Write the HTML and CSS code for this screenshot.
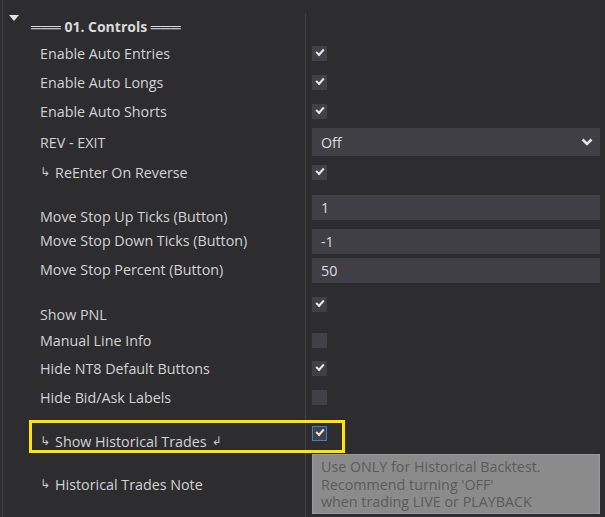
FILE: index.html
```html
<!DOCTYPE html>
<html lang="en">
<head>
	<meta charset="UTF-8">
	<meta name="viewport" content="width=device-width, initial-scale=1.0">
	<title>Properties</title>
	<link rel="stylesheet" href="styles.css">
</head>
<body>
	<div class="panel">
		<div class="row header">
			<div class="name">
				<span class="toggle"></span>
				<span class="title">═══ 01. Controls ═══</span>
			</div>
			<div class="value"></div>
		</div>

		<div class="row r29">
			<div class="name">Enable Auto Entries</div>
			<div class="value"><span class="check on"></span></div>
		</div>
		<div class="row r29">
			<div class="name">Enable Auto Longs</div>
			<div class="value"><span class="check on"></span></div>
		</div>
		<div class="row r29">
			<div class="name">Enable Auto Shorts</div>
			<div class="value"><span class="check on"></span></div>
		</div>
		<div class="row r-select">
			<div class="name">REV - EXIT</div>
			<div class="value">
				<div class="select">
					<span>Off</span>
					<svg width="12" height="8" viewBox="0 0 12 8"><polyline points="1.5,1.5 6,6 10.5,1.5" fill="none" stroke="#e6e6e6" stroke-width="2.6"/></svg>
				</div>
			</div>
		</div>
		<div class="row r29">
			<div class="name"><span class="sub">↳</span>ReEnter On Reverse</div>
			<div class="value"><span class="check on"></span></div>
		</div>

		<div class="row tall r-up">
			<div class="name">Move Stop Up Ticks (Button)</div>
			<div class="value"><div class="input">1</div></div>
		</div>
		<div class="row r29 r-input">
			<div class="name">Move Stop Down Ticks (Button)</div>
			<div class="value"><div class="input">-1</div></div>
		</div>
		<div class="row r29 r-input">
			<div class="name">Move Stop Percent (Button)</div>
			<div class="value"><div class="input">50</div></div>
		</div>

		<div class="row tall r-pnl">
			<div class="name">Show PNL</div>
			<div class="value"><span class="check on"></span></div>
		</div>
		<div class="row r28">
			<div class="name">Manual Line Info</div>
			<div class="value"><span class="check"></span></div>
		</div>
		<div class="row r29">
			<div class="name">Hide NT8 Default Buttons</div>
			<div class="value"><span class="check on"></span></div>
		</div>
		<div class="row r28">
			<div class="name">Hide Bid/Ask Labels</div>
			<div class="value"><span class="check"></span></div>
		</div>

		<div class="row tall r-hist">
			<div class="name"><span class="sub">↳</span>Show Historical Trades<span class="ret">↲</span></div>
			<div class="value"><span class="check on focus"></span></div>
			<div class="highlight"></div>
		</div>
		<div class="row r-note">
			<div class="name"><span class="sub">↳</span>Historical Trades Note</div>
			<div class="value">
				<div class="note">Use ONLY for Historical Backtest.<br>Recommend turning 'OFF'<br>when trading LIVE or PLAYBACK</div>
			</div>
		</div>
	</div>
</body>
</html>
```

FILE: styles.css
```css
html, body {
	margin: 0;
	padding: 0;
	height: 100%;
	background: #2d2d30;
}

body {
	font-family: "Open Sans", "Noto Sans", sans-serif;
	font-size: 14.3px;
	color: #d2d2d2;
	overflow: hidden;
}

.panel {
	margin-left: 2px;
	min-height: 100%;
	border-left: 1px solid #414145;
}

.row {
	display: flex;
	position: relative;
}

.name {
	width: 265px;
	padding-left: 37px;
	border-right: 1px solid #434347;
	display: flex;
	align-items: center;
	line-height: 19px;
	white-space: nowrap;
}

.value {
	flex: 1;
	padding: 0 5px 0 6px;
	display: flex;
	align-items: center;
}

/* header */
.header {
	height: 25px;
	padding-top: 14px;
}
.header .name {
	padding-left: 6px;
	width: 296px;
}
.toggle {
	align-self: flex-start;
	margin-top: 1px;
	width: 0;
	height: 0;
	border-left: 5.5px solid transparent;
	border-right: 5.5px solid transparent;
	border-top: 6px solid #e0e0e0;
	margin-right: 12px;
}
.title {
	font-weight: 700;
	font-size: 14px;
	color: #dadada;
}

/* row heights */
.r29 { height: 29px; }
.r28 { height: 28px; }
.r-select { height: 32px; }
.r-select .value { align-items: flex-start; padding-top: 2px; }

.tall .name { align-items: flex-end; }
.tall .value { align-items: flex-start; }
.r-up { height: 39px; }
.r-up .name { padding-bottom: 0; }
.r-up .value { padding-top: 8px; }
.r-input .value { align-items: flex-start; padding-top: 3px; }

.r-pnl { height: 42px; }
.r-pnl .name { padding-bottom: 2px; }
.r-pnl .value { padding-top: 13px; }

.r-hist { height: 43px; }
.r-hist .name { padding-bottom: 3px; }
.r-hist .value { padding-top: 15px; }

.r-note { height: 63px; }
.r-note .name { align-items: flex-start; padding-top: 21px; }
.r-note .value { align-items: flex-start; }

/* controls */
.check {
	width: 15px;
	height: 15px;
	background: #404046;
	box-sizing: border-box;
	position: relative;
}
.check.on::after {
	content: "";
	position: absolute;
	left: 4px;
	top: 3px;
	width: 6px;
	height: 3px;
	border-left: 2px solid #e6e6e6;
	border-bottom: 2px solid #e6e6e6;
	transform: rotate(-48deg);
}
.check.focus {
	border: 1px solid #3b7fd0;
}
.check.focus::after {
	left: 3px;
	top: 2px;
}

.select,
.input {
	flex: 1;
	background: #3f3f45;
	box-sizing: border-box;
	padding-left: 9px;
	display: flex;
	align-items: center;
	color: #dcdcdc;
}
.select {
	height: 28px;
	justify-content: space-between;
	padding-right: 7px;
}
.input {
	height: 25px;
}

.sub {
	font-family: "DejaVu Sans", sans-serif;
	font-size: 12px;
	margin-right: 5px;
	color: #c8c8c8;
}
.ret {
	font-family: "DejaVu Sans", sans-serif;
	font-size: 12px;
	margin-left: 5px;
	color: #c8c8c8;
}

.note {
	flex: 1;
	height: 60px;
	box-sizing: border-box;
	background: #8b8b8b;
	border: 1px solid #9a9a9a;
	color: #5b5b5b;
	padding: 3px 0 0 8px;
	line-height: 17.5px;
	font-size: 14.3px;
	overflow: hidden;
}

.highlight {
	position: absolute;
	left: 26px;
	top: 9px;
	width: 310px;
	height: 27px;
	border: 3px solid #ffe600;
	pointer-events: none;
}
```
